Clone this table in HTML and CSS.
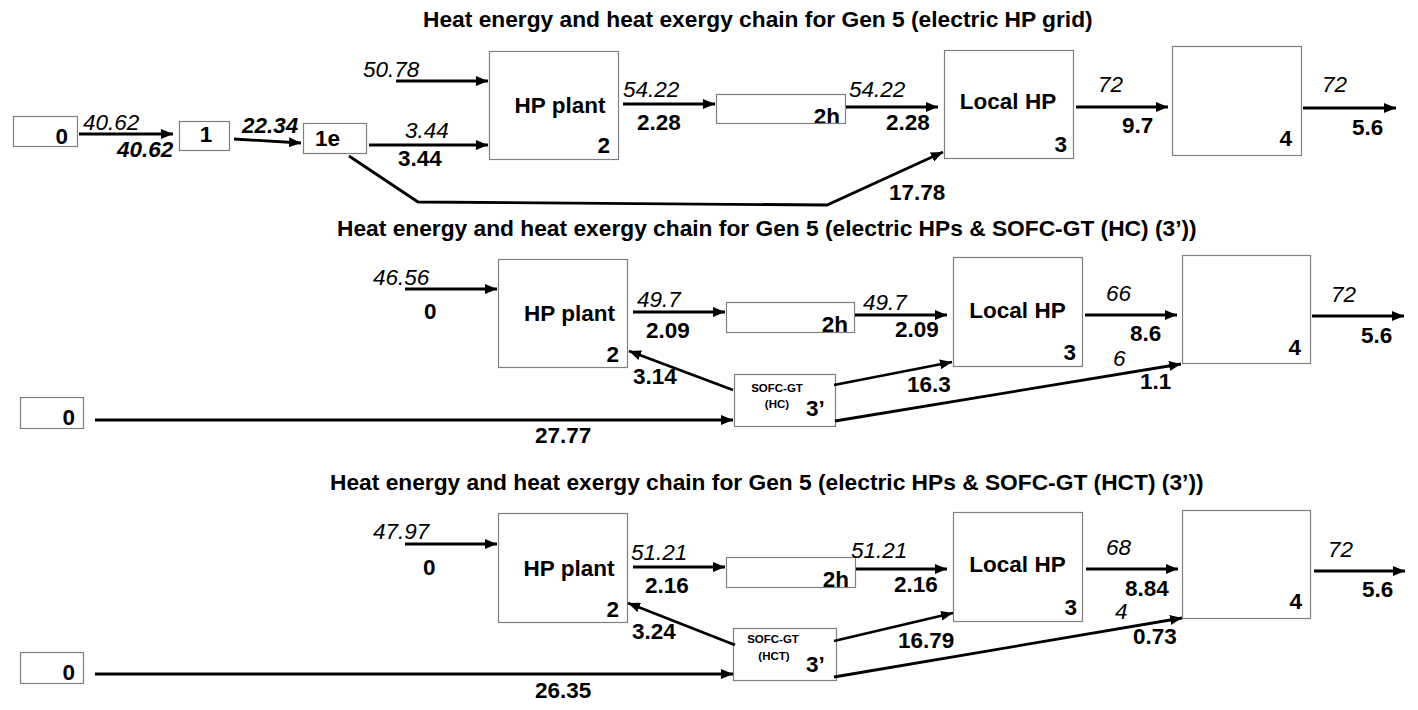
FILE: index.html
```html
<!DOCTYPE html>
<html lang="en">
<head>
<meta charset="utf-8">
<title>Heat energy and heat exergy chains for Gen 5</title>
<link rel="stylesheet" href="styles.css">
</head>
<body>
<main class="page">

<section class="chain chain--grid">
  <h2 class="title">Heat energy and heat exergy chain for Gen 5 (electric HP grid)</h2>
  <svg class="diagram diagram--grid" viewBox="0 32 1418 183" width="1418" height="183">
    <defs>
      <marker id="ah" viewBox="0 0 12 10" refX="12" refY="5" markerWidth="12" markerHeight="10" markerUnits="userSpaceOnUse" orient="auto">
        <path class="head" d="M0,0 L12,5 L0,10 z"/>
      </marker>
    </defs>
    <!-- nodes -->
    <rect class="box" x="13.5" y="116.5" width="64" height="30"/>
    <text class="t b end" x="68" y="144">0</text>
    <rect class="box" x="179.5" y="121.5" width="50" height="29"/>
    <text class="t b mid" x="206" y="142">1</text>
    <rect class="box" x="303.5" y="123.5" width="63" height="30"/>
    <text class="t b" x="315" y="146">1e</text>
    <rect class="box" x="489.5" y="51.5" width="129" height="108"/>
    <text class="t b mid" x="560" y="113">HP plant</text>
    <text class="t b end" x="610" y="153">2</text>
    <text class="t b end" x="840" y="124">2h</text>
    <rect class="box" x="716.5" y="94.5" width="129" height="29"/>
    <rect class="box" x="944.5" y="50.5" width="129" height="108"/>
    <text class="t b mid" x="1008" y="109">Local HP</text>
    <text class="t b end" x="1067" y="152">3</text>
    <rect class="box" x="1172.5" y="46.5" width="129" height="109"/>
    <text class="t b end" x="1292" y="146">4</text>
    <!-- flows -->
    <line class="arr" x1="79" y1="134" x2="173" y2="134"/>
    <line class="arr" x1="234" y1="139" x2="301" y2="143"/>
    <line class="arr" x1="369" y1="145" x2="488" y2="145"/>
    <line class="arr" x1="396" y1="81" x2="488" y2="81"/>
    <polyline class="arr" points="349,156 418,202 827,205 943,152"/>
    <line class="arr" x1="623" y1="104" x2="715" y2="104"/>
    <line class="arr" x1="846" y1="107" x2="938" y2="107"/>
    <line class="arr" x1="1076" y1="107" x2="1168" y2="107"/>
    <line class="arr" x1="1303" y1="108" x2="1396" y2="108"/>
    <!-- values -->
    <text class="t it" x="83" y="130">40.62</text>
    <text class="t b it" x="117" y="157">40.62</text>
    <text class="t b it" x="242" y="133">22.34</text>
    <text class="t it" x="405" y="138">3.44</text>
    <text class="t b" x="398" y="166">3.44</text>
    <text class="t it" x="363" y="77">50.78</text>
    <text class="t it" x="623" y="97">54.22</text>
    <text class="t b" x="637" y="130">2.28</text>
    <text class="t it" x="849" y="97">54.22</text>
    <text class="t b" x="886" y="130">2.28</text>
    <text class="t b" x="889" y="200">17.78</text>
    <text class="t it" x="1098" y="92">72</text>
    <text class="t b" x="1122" y="133">9.7</text>
    <text class="t it" x="1322" y="92">72</text>
    <text class="t b" x="1352" y="135">5.6</text>
  </svg>
</section>

<section class="chain chain--hc">
  <h2 class="title">Heat energy and heat exergy chain for Gen 5 (electric HPs &amp; SOFC-GT (HC) (3’))</h2>
  <svg class="diagram diagram--hc" viewBox="0 241 1418 228" width="1418" height="228">
    <!-- nodes -->
    <rect class="box" x="498.5" y="259.5" width="129" height="108"/>
    <text class="t b mid" x="569.5" y="321">HP plant</text>
    <text class="t b end" x="619" y="362">2</text>
    <text class="t b end" x="848" y="332">2h</text>
    <rect class="box" x="726.5" y="302.5" width="128" height="30"/>
    <rect class="box" x="734.5" y="374.5" width="101" height="52"/>
    <text class="t s mid" x="777" y="392">SOFC-GT</text>
    <text class="t s mid" x="777" y="408">(HC)</text>
    <text class="t b" x="806" y="416">3’</text>
    <rect class="box" x="20.5" y="397.5" width="63" height="31"/>
    <text class="t b end" x="75" y="425">0</text>
    <rect class="box" x="953.5" y="257.5" width="129" height="109"/>
    <text class="t b mid" x="1017.5" y="318">Local HP</text>
    <text class="t b end" x="1076" y="360">3</text>
    <rect class="box" x="1182.5" y="255.5" width="128" height="108"/>
    <text class="t b end" x="1301" y="355">4</text>
    <!-- flows -->
    <line class="arr" x1="405" y1="289" x2="497" y2="289"/>
    <line class="arr" x1="633" y1="312" x2="725" y2="312"/>
    <line class="arr" x1="855" y1="315" x2="947" y2="315"/>
    <line class="arr" x1="733" y1="390" x2="629" y2="351"/>
    <line class="arr" x1="834" y1="385" x2="952" y2="362"/>
    <line class="arr" x1="835" y1="421" x2="1181" y2="364"/>
    <line class="arr" x1="95" y1="420" x2="733" y2="420"/>
    <line class="arr" x1="1085" y1="315" x2="1177" y2="315"/>
    <line class="arr" x1="1312" y1="316" x2="1404" y2="316"/>
    <!-- values -->
    <text class="t it" x="373" y="285">46.56</text>
    <text class="t b" x="424" y="319">0</text>
    <text class="t it" x="637" y="307">49.7</text>
    <text class="t b" x="646" y="338">2.09</text>
    <text class="t it" x="863" y="310">49.7</text>
    <text class="t b" x="895" y="337">2.09</text>
    <text class="t b" x="633" y="384">3.14</text>
    <text class="t b" x="907" y="392">16.3</text>
    <text class="t it" x="1113" y="366">6</text>
    <text class="t b" x="1140" y="389">1.1</text>
    <text class="t b" x="535" y="443">27.77</text>
    <text class="t it" x="1106" y="301">66</text>
    <text class="t b" x="1130" y="341">8.6</text>
    <text class="t it" x="1331" y="302">72</text>
    <text class="t b" x="1361" y="343">5.6</text>
  </svg>
</section>

<section class="chain chain--hct">
  <h2 class="title">Heat energy and heat exergy chain for Gen 5 (electric HPs &amp; SOFC-GT (HCT) (3’))</h2>
  <svg class="diagram diagram--hct" viewBox="0 495 1418 215" width="1418" height="215">
    <!-- nodes -->
    <rect class="box" x="498.5" y="513.5" width="129" height="109"/>
    <text class="t b mid" x="569" y="576">HP plant</text>
    <text class="t b end" x="619" y="617">2</text>
    <text class="t b end" x="849" y="587">2h</text>
    <rect class="box" x="726.5" y="557.5" width="129" height="30"/>
    <rect class="box" x="733.5" y="628.5" width="103" height="52"/>
    <text class="t s mid" x="773" y="643">SOFC-GT</text>
    <text class="t s mid" x="774" y="660">(HCT)</text>
    <text class="t b" x="806" y="672">3’</text>
    <rect class="box" x="20.5" y="652.5" width="63" height="31"/>
    <text class="t b end" x="75" y="680">0</text>
    <rect class="box" x="953.5" y="512.5" width="129" height="109"/>
    <text class="t b mid" x="1017.5" y="572">Local HP</text>
    <text class="t b end" x="1077" y="615">3</text>
    <rect class="box" x="1182.5" y="510.5" width="128" height="108"/>
    <text class="t b end" x="1302" y="609">4</text>
    <!-- flows -->
    <line class="arr" x1="405" y1="544" x2="497" y2="544"/>
    <line class="arr" x1="633" y1="567" x2="725" y2="567"/>
    <line class="arr" x1="856" y1="569" x2="947" y2="569"/>
    <line class="arr" x1="735" y1="645" x2="628" y2="603"/>
    <line class="arr" x1="834" y1="641" x2="953" y2="613"/>
    <line class="arr" x1="834" y1="677" x2="1182" y2="618"/>
    <line class="arr" x1="95" y1="674" x2="733" y2="674"/>
    <line class="arr" x1="1086" y1="569" x2="1178" y2="569"/>
    <line class="arr" x1="1314" y1="571" x2="1405" y2="571"/>
    <!-- values -->
    <text class="t it" x="373" y="539">47.97</text>
    <text class="t b" x="423" y="575">0</text>
    <text class="t it" x="631" y="560">51.21</text>
    <text class="t b" x="645" y="593">2.16</text>
    <text class="t it" x="851" y="558">51.21</text>
    <text class="t b" x="894" y="592">2.16</text>
    <text class="t b" x="632" y="639">3.24</text>
    <text class="t b" x="898" y="648">16.79</text>
    <text class="t it" x="1115" y="619">4</text>
    <text class="t b" x="1133" y="644">0.73</text>
    <text class="t b" x="535" y="698">26.35</text>
    <text class="t it" x="1106" y="555">68</text>
    <text class="t b" x="1125" y="596">8.84</text>
    <text class="t it" x="1328" y="557">72</text>
    <text class="t b" x="1362" y="597">5.6</text>
  </svg>
</section>

</main>
</body>
</html>
```

FILE: styles.css
```css
html, body {
  margin: 0;
  padding: 0;
  background: #ffffff;
}

.page {
  width: 1418px;
  height: 710px;
  overflow: hidden;
  padding-top: 6px;
  box-sizing: border-box;
  font-family: "Liberation Sans", Arial, Helvetica, sans-serif;
  color: #000000;
}

.chain {
  display: flex;
  flex-direction: column;
}

.title {
  margin: 0;
  font-size: 22.75px;
  line-height: 26px;
  font-weight: 700;
  white-space: nowrap;
  color: #000000;
}

.chain--grid .title { padding-left: 423px; }
.chain--hc .title { padding-left: 337px; }
.chain--hct .title { padding-left: 330px; }

.diagram {
  display: block;
  overflow: visible;
}

.box {
  fill: none;
  stroke: #808080;
  stroke-width: 1.2;
}

.arr {
  fill: none;
  stroke: #000000;
  stroke-width: 2.8;
  stroke-linejoin: miter;
  marker-end: url(#ah);
}

.head {
  fill: #000000;
}

.t {
  font-family: "Liberation Sans", Arial, Helvetica, sans-serif;
  font-size: 22.5px;
  fill: #000000;
}

.b { font-weight: 700; }
.it { font-style: italic; }
.s {
  font-size: 11.5px;
  font-weight: 700;
}
.mid { text-anchor: middle; }
.end { text-anchor: end; }
```
